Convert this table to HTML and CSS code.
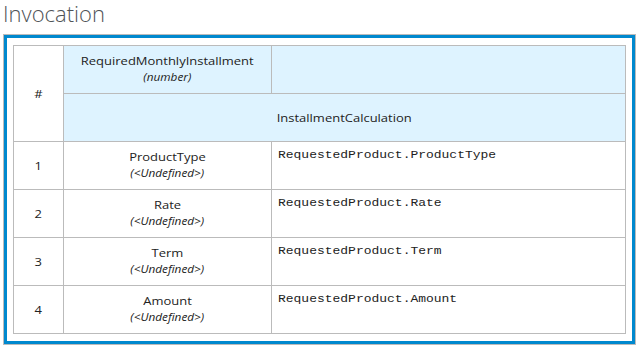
FILE: index.html
```html
<!DOCTYPE html>
<html lang="en">
<head>
  <meta charset="UTF-8">
  <title>Invocation</title>
  <link rel="stylesheet" href="styles.css">
</head>
<body>
  <h2 class="title">Invocation</h2>
  <div class="grid-frame">
    <div class="grid">
      <div class="cell row-num head-num"><span class="txt">#</span></div>
      <div class="cell head">
        <span class="txt name">RequiredMonthlyInstallment</span>
        <span class="txt type">(number)</span>
      </div>
      <div class="cell head"></div>
      <div class="cell head head-fn"><span class="txt">InstallmentCalculation</span></div>

      <div class="cell row-num"><span class="txt">1</span></div>
      <div class="cell param">
        <span class="txt name">ProductType</span>
        <span class="txt type">(&lt;Undefined&gt;)</span>
      </div>
      <div class="cell expr"><span class="txt">RequestedProduct.ProductType</span></div>

      <div class="cell row-num"><span class="txt">2</span></div>
      <div class="cell param">
        <span class="txt name">Rate</span>
        <span class="txt type">(&lt;Undefined&gt;)</span>
      </div>
      <div class="cell expr"><span class="txt">RequestedProduct.Rate</span></div>

      <div class="cell row-num"><span class="txt">3</span></div>
      <div class="cell param">
        <span class="txt name">Term</span>
        <span class="txt type">(&lt;Undefined&gt;)</span>
      </div>
      <div class="cell expr"><span class="txt">RequestedProduct.Term</span></div>

      <div class="cell row-num"><span class="txt">4</span></div>
      <div class="cell param">
        <span class="txt name">Amount</span>
        <span class="txt type">(&lt;Undefined&gt;)</span>
      </div>
      <div class="cell expr"><span class="txt">RequestedProduct.Amount</span></div>
    </div>
  </div>
</body>
</html>
```

FILE: styles.css
```css
body {
  margin: 0;
  background: #ffffff;
  font-family: "Open Sans", "Noto Sans", sans-serif;
  color: #222;
}

.title {
  margin: 0 0 8px 0;
  padding-left: 3px;
  font-size: 22px;
  font-weight: 300;
  line-height: 26px;
  color: #4f5357;
}

.grid-frame {
  margin-left: 3px;
  width: 633px;
  box-sizing: border-box;
  border: 1px solid #bbbbbb;
  box-shadow: inset 0 0 0 3px #0088ce;
  padding: 10px 9px;
}

.grid {
  display: grid;
  grid-template-columns: 49px 207px 353px;
  grid-template-rows: repeat(6, 47px);
  gap: 1px;
  padding: 1px;
  background: #bbbbbb;
}

.cell {
  background: #ffffff;
  font-size: 11px;
  display: flex;
  flex-direction: column;
  align-items: center;
}

/* the grid text is drawn a bit wider than the font */
.txt {
  display: inline-block;
  white-space: nowrap;
  transform: scaleX(1.18);
}

.row-num {
  justify-content: center;
}

.head-num {
  grid-row: span 2;
}

.head {
  background: #def3ff;
  padding-top: 9px;
}

.head-fn {
  grid-column: span 2;
  padding-top: 0;
  justify-content: center;
}

.param {
  padding-top: 9px;
}

.name {
  line-height: 12px;
}

.type {
  font-size: 10px;
  font-style: italic;
  line-height: 10px;
  margin-top: 5px;
}

.expr {
  align-items: flex-start;
  padding: 7px 0 0 6px;
  font-family: "Liberation Mono", monospace;
  font-size: 11px;
  line-height: 13px;
}

.expr .txt {
  transform-origin: left center;
}
```
